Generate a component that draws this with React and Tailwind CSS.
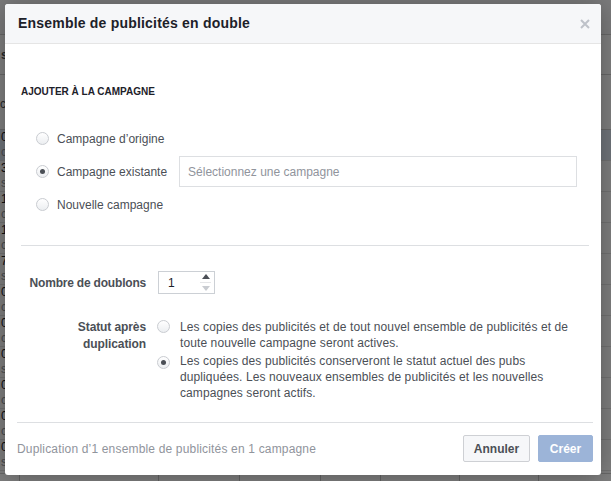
import React from "react";

const font = { fontFamily: '"Liberation Sans", Arial, sans-serif' };

const bgRows = ["0", "3", "1", "1", "7", "0", "0", "0", "0", "0", "0"];
const bgCols = [19, 158, 239, 320, 380, 459, 538];

const Radio = ({ checked }) => (
  <span className="flex h-[13px] w-[13px] shrink-0 items-center justify-center rounded-full border border-[#c9ccd1] bg-linear-to-b from-white to-[#eceef1]">
    {checked && <span className="h-[5px] w-[5px] rounded-full bg-[#4b4f56]" />}
  </span>
);

const CampaignOption = ({ checked, label, children }) => (
  <div className="flex h-[33px] items-center">
    <Radio checked={checked} />
    <span className="ml-[8px] text-[12px] text-[#4b4f56]">{label}</span>
    {children}
  </div>
);

const Background = () => (
  <div className="absolute inset-0 bg-white">
    <div className="h-[35px] border-b border-[#d0d0d0] bg-[#f6f7f9]" />
    <div className="flex h-[40px] items-center border-b border-[#d0d0d0] pl-[1px] text-[12px] font-bold text-[#4b4f56]">
      s
    </div>
    <div className="h-[55px] border-b border-[#d0d0d0] pt-[20px] text-[12px] text-[#4b4f56]">cs</div>
    {bgRows.map((n, i) => (
      <div
        key={i}
        className={`h-[31px] border-b border-[#e5e5e5] pl-[1px] text-[12px] leading-[15px] ${i === 0 ? "bg-[#dfe8f6]" : ""}`}
      >
        <div className="text-[#1d2129]">{n}</div>
        <div className="text-[#90949c]">{i % 3 === 1 ? "s" : "c"}</div>
      </div>
    ))}
    <div className="absolute bottom-0 left-0 right-0 h-[8px] border-t border-[#d0d0d0]">
      {bgCols.map((x) => (
        <div key={x} className="absolute top-0 bottom-0 border-l border-[#c8c8c8]" style={{ left: x }} />
      ))}
    </div>
  </div>
);

export default function App() {
  return (
    <div className="relative h-[481px] w-[611px] overflow-hidden" style={font}>
      <Background />
      <div className="absolute inset-0 bg-black/50" />

      <div className="absolute left-[5px] top-[4px] flex h-[471px] w-[596px] flex-col overflow-hidden rounded-[3px] bg-white shadow-[0_2px_26px_rgba(0,0,0,0.3)]">
        {/* header */}
        <div className="flex h-[40px] shrink-0 items-center justify-between border-b border-[#e5e5e5] bg-[#f6f7f9] pl-[13px] pr-[10px]">
          <h2 className="text-[14px] font-bold tracking-[0.2px] text-[#1d2129]">Ensemble de publicités en double</h2>
          <svg width="10" height="10" viewBox="0 0 10 10" className="mr-[1px]">
            <path d="M1 1L9 9M9 1L1 9" stroke="#bec2c9" strokeWidth="2" />
          </svg>
        </div>

        {/* body */}
        <div className="flex flex-1 flex-col pl-[16px] pr-[12px] pt-[41px]">
          <div className="text-[10px] font-bold leading-[14px] text-[#1d2129]">AJOUTER À LA CAMPAGNE</div>

          <div className="mt-[23px] pl-[15px] pr-[12px]">
            <CampaignOption label="Campagne d’origine" />
            <CampaignOption checked label="Campagne existante">
              <div className="ml-[12px] flex h-[31px] flex-1 items-center border border-[#dddfe2] px-[8px] text-[12px] text-[#90949c]">
                Sélectionnez une campagne
              </div>
            </CampaignOption>
            <CampaignOption label="Nouvelle campagne" />
          </div>

          <div className="mt-[24px] border-t border-[#dddfe2]" />

          <div className="mt-[25px] flex items-center">
            <div className="w-[125px] text-right text-[12px] font-bold tracking-[-0.2px] text-[#4b4f56]">Nombre de doublons</div>
            <div className="ml-[12px] flex h-[23px] w-[57px] items-center justify-between border border-[#ccd0d5] pl-[9px] pr-[3px] text-[12px] text-[#1d2129]">
              <span>1</span>
              <span className="flex h-full flex-col items-center justify-center gap-[3px]">
                <svg width="8" height="5" viewBox="0 0 8 5">
                  <path d="M0 5L4 0L8 5Z" fill="#4b4f56" />
                </svg>
                <span className="h-px w-[11px] bg-[#e5e6e8]" />
                <svg width="8" height="5" viewBox="0 0 8 5">
                  <path d="M0 0L8 0L4 5Z" fill="#c9ccd1" />
                </svg>
              </span>
            </div>
          </div>

          <div className="mt-[25px] flex items-start">
            <div className="w-[125px] text-right text-[12px] font-bold leading-[17px] tracking-[-0.1px] text-[#4b4f56]">
              Statut après
              <br />
              duplication
            </div>
            <div className="ml-[11px] flex flex-1 flex-col gap-[2px] pr-[8px]">
              <div className="flex items-start">
                <span className="mt-[1px]">
                  <Radio />
                </span>
                <p className="ml-[10px] text-[12px] leading-[16px] tracking-[0.1px] text-[#4b4f56]">
                  Les copies des publicités et de tout nouvel ensemble de publicités et de toute nouvelle campagne seront actives.
                </p>
              </div>
              <div className="flex items-start">
                <span className="mt-[3px]">
                  <Radio checked />
                </span>
                <p className="ml-[10px] text-[12px] leading-[16px] tracking-[0.1px] text-[#4b4f56]">
                  Les copies des publicités conserveront le statut actuel des pubs dupliquées. Les nouveaux ensembles de publicités et les nouvelles campagnes seront actifs.
                </p>
              </div>
            </div>
          </div>
        </div>

        {/* footer */}
        <div className="ml-[12px] mr-[8px] flex shrink-0 items-center justify-between border-t border-[#dddfe2] pb-[13px] pt-[12px]">
          <span className="text-[12px] tracking-[0.17px] text-[#90949c]">Duplication d’1 ensemble de publicités en 1 campagne</span>
          <div className="flex gap-[8px]">
            <button className="h-[27px] w-[67px] rounded-[2px] border border-[#ced0d4] bg-[#f6f7f9] text-[12px] font-bold text-[#4b4f56]">
              Annuler
            </button>
            <button className="h-[27px] w-[55px] rounded-[2px] border border-[#9cb4d8] bg-[#9cb4d8] text-[12px] font-bold text-white">
              Créer
            </button>
          </div>
        </div>
      </div>
    </div>
  );
}
